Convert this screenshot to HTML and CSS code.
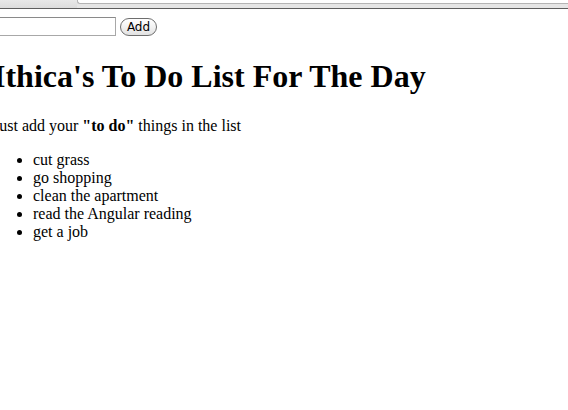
FILE: index.html
```html
<!DOCTYPE html>
<html>
<head>
<meta charset="utf-8">
<title>To Do</title>
<link rel="stylesheet" href="styles.css">
</head>
<body>
<div class="chrome">
  <div class="chrome-left"></div>
  <div class="chrome-right"><div class="chrome-field"></div></div>
</div>
<div class="page">
  <form class="add-form">
    <input class="todo-input" type="text"><button class="add-btn" type="button">Add</button>
  </form>
  <h1 class="title">Ithica's To Do List For The Day</h1>
  <p class="intro">Just add your <b>"to do"</b> things in the list</p>
  <ul class="todo-list">
    <li>cut grass</li>
    <li>go shopping</li>
    <li>clean the apartment</li>
    <li>read the Angular reading</li>
    <li>get a job</li>
  </ul>
</div>
</body>
</html>
```
FILE: styles.css
```css
html, body {
  margin: 0;
  padding: 0;
  background: #fff;
  overflow: hidden;
}
body {
  font-family: "Liberation Serif", "Times New Roman", serif;
  font-size: 16px;
  color: #000;
}
.chrome {
  display: flex;
  height: 8px;
  background: #e2e2e2;
  border-bottom: 1px solid #5e5e5e;
}
.chrome-left {
  width: 77px;
  background: linear-gradient(#e8e8e8, #dcdcdc);
}
.chrome-right {
  flex: 1;
  background: #e6e6e6;
}
.chrome-field {
  height: 3px;
  background: #fff;
  border-bottom: 1px solid #b5b5b5;
  border-left: 1px solid #b5b5b5;
  border-bottom-left-radius: 3px;
}
.page {
  margin: 8px 8px 8px -7px;
}
.add-form {
  display: flex;
  align-items: flex-start;
  margin: 0;
  height: 20px;
}
.todo-input {
  box-sizing: border-box;
  width: 123px;
  height: 19px;
  margin: 0;
  border: 1px solid #a8a8a8;
  border-top-color: #8a8a8a;
  background: #fff;
  padding: 0 2px;
}
.add-btn {
  box-sizing: border-box;
  margin: 1px 0 0 4px;
  width: 37px;
  height: 18px;
  padding: 0;
  border: 1px solid #6e6e6e;
  border-radius: 9px;
  background: linear-gradient(#ffffff, #f2f2f2 50%, #e2e2e2);
  font-family: "DejaVu Sans", "Liberation Sans", sans-serif;
  font-size: 12px;
  color: #000;
  line-height: 16px;
}
.title {
  font-size: 32px;
  font-weight: bold;
  margin: 21px 0 22px 0;
}
.intro {
  margin: 16px 0;
}
.todo-list {
  margin: 16px 0;
  padding-left: 40px;
}
```
